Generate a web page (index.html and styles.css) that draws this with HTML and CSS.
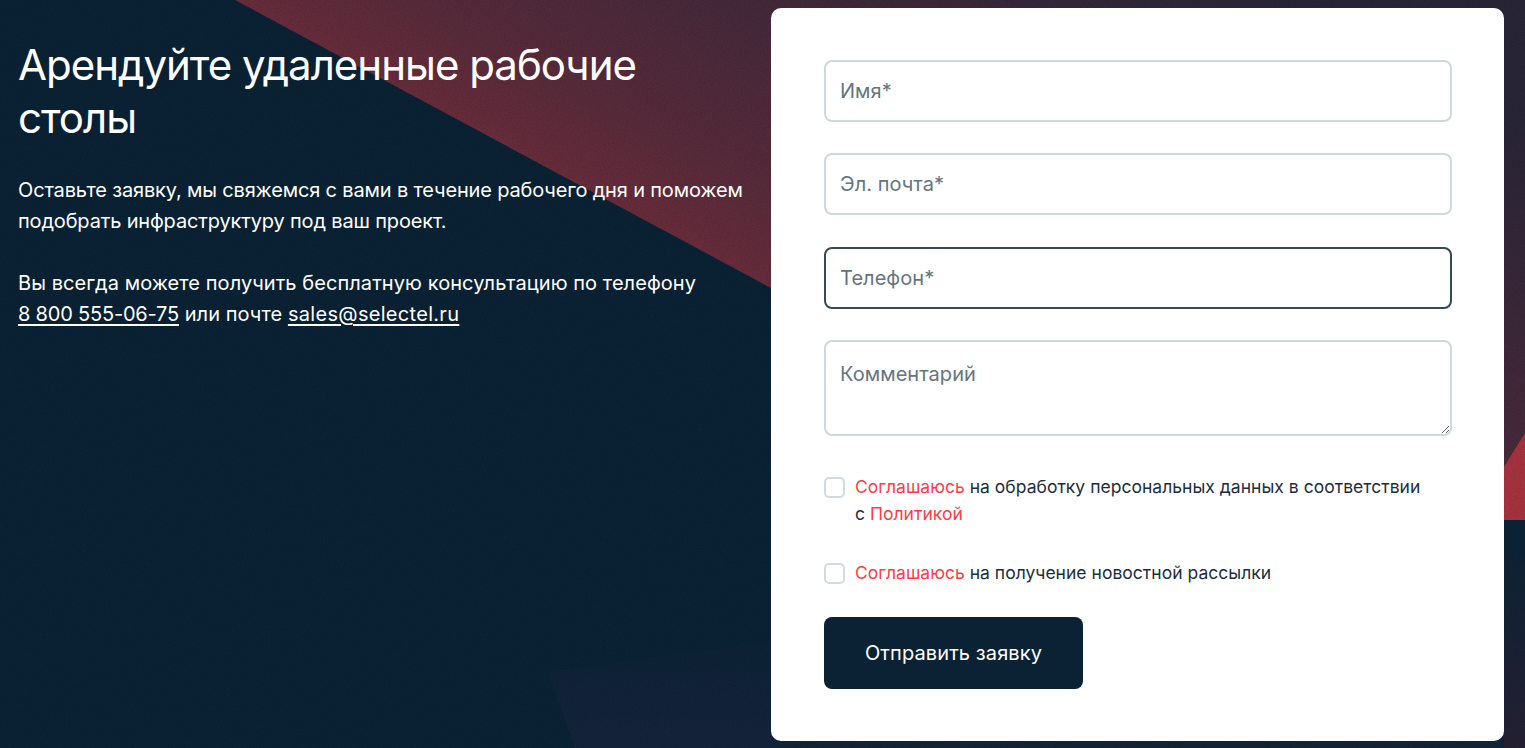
FILE: index.html
```html
<!DOCTYPE html>
<html lang="ru">
<head>
<meta charset="utf-8">
<title>Арендуйте удаленные рабочие столы</title>
<link rel="stylesheet" href="styles.css">
</head>
<body>
<svg class="bg" viewBox="0 0 1525 748" preserveAspectRatio="none" aria-hidden="true">
  <defs>
    <linearGradient id="wine" gradientUnits="userSpaceOnUse" x1="771" y1="288" x2="1006" y2="-152">
      <stop offset="0" stop-color="#672c3a"/>
      <stop offset="0.15" stop-color="#592b3a"/>
      <stop offset="0.45" stop-color="#45293a"/>
      <stop offset="1" stop-color="#282536"/>
    </linearGradient>
    <linearGradient id="dusk" gradientUnits="userSpaceOnUse" x1="0" y1="610" x2="0" y2="748">
      <stop offset="0" stop-color="#0a2234"/>
      <stop offset="1" stop-color="#15233a"/>
    </linearGradient>
    <linearGradient id="dusk2" gradientUnits="userSpaceOnUse" x1="0" y1="540" x2="0" y2="748">
      <stop offset="0" stop-color="#0c2335"/>
      <stop offset="1" stop-color="#252033"/>
    </linearGradient>
    <filter id="grain" x="0" y="0" width="100%" height="100%">
      <feTurbulence type="fractalNoise" baseFrequency="0.7" numOctaves="2" seed="4"/>
      <feColorMatrix type="matrix" values="0 0 0 0 0  0 0 0 0 0  0 0 0 0 0  0 0 0 1.4 -0.55"/>
    </filter>
  </defs>
  <rect width="1525" height="748" fill="#0a2234"/>
  <polygon points="235,0 1525,0 1525,520 1450,520 771,288" fill="url(#wine)"/>
  <polygon points="1504,467 1525,433 1525,520 1504,520" fill="#a5333f"/>
  <polygon points="548,672 1000,610 1504,610 1504,748 575,748" fill="url(#dusk)"/>
  <rect x="1504" y="520" width="21" height="228" fill="url(#dusk2)"/>
  <rect width="1525" height="748" filter="url(#grain)" opacity="0.16"/>
</svg>
<main class="page">
  <section class="intro">
    <h1 class="title">Арендуйте удаленные рабочие столы</h1>
    <p class="lead lead-tight">Оставьте заявку, мы свяжемся с вами в течение рабочего дня и поможем подобрать инфраструктуру под ваш проект.</p>
    <p class="lead">Вы всегда можете получить бесплатную консультацию по телефону<br><a class="plain-link phone-link" href="#">8 800 555-06-75</a> или почте <a class="plain-link mail-link" href="#">sales@selectel.ru</a></p>
  </section>
  <form class="card">
    <input class="field" type="text" placeholder="Имя*">
    <input class="field" type="email" placeholder="Эл. почта*">
    <input class="field field-active" type="tel" placeholder="Телефон*">
    <textarea class="field field-area" placeholder="Комментарий"></textarea>
    <label class="check check-first">
      <span class="box"></span>
      <span class="check-text"><a class="accent" href="#">Соглашаюсь</a> на обработку персональных данных в соответствии<br>с <a class="accent" href="#">Политикой</a></span>
    </label>
    <label class="check check-second">
      <span class="box"></span>
      <span class="check-text"><a class="accent" href="#">Соглашаюсь</a> на получение новостной рассылки</span>
    </label>
    <button class="submit" type="button">Отправить заявку</button>
  </form>
</main>
</body>
</html>
```
FILE: styles.css
```css
* { box-sizing: border-box; }
html, body { margin: 0; height: 100%; }
body {
  position: relative;
  width: 1525px;
  height: 748px;
  overflow: hidden;
  background: #0a2234;
  font-family: Inter, "Noto Sans", sans-serif;
}
.bg {
  position: absolute;
  inset: 0;
  width: 100%;
  height: 100%;
}
.page {
  position: relative;
  display: flex;
  height: 748px;
  padding: 8px 21px 7px 18px;
}
.intro {
  width: 753px;
  flex: none;
  padding-top: 30px;
  color: #fff;
}
.title {
  margin: 0 0 31px;
  width: 660px;
  font-size: 42px;
  line-height: 53px;
  font-weight: 400;
  letter-spacing: -1px;
}
.lead {
  margin: 0 0 31px;
  width: 740px;
  font-size: 20px;
  line-height: 31px;
  letter-spacing: 0.07px;
}
.lead-tight { letter-spacing: -0.16px; }
.plain-link { color: #fff; text-decoration: underline; text-underline-offset: 3px; }
.phone-link { letter-spacing: -0.2px; }
.mail-link { letter-spacing: 0.3px; }
.card {
  flex: 1;
  display: flex;
  flex-direction: column;
  align-items: flex-start;
  padding: 52px 52px 52px 53px;
  background: #fff;
  border-radius: 10px;
}
.field {
  display: block;
  width: 100%;
  height: 62px;
  flex: none;
  margin-bottom: 31.33px;
  padding: 0 14px;
  border: 2px solid #d0d8dc;
  border-radius: 8px;
  background: #fff;
  color: #0a2234;
  font: 400 20px/28px Inter, "Noto Sans", sans-serif;
  letter-spacing: 0.05px;
  outline: none;
}
.field::placeholder { color: #63757f; opacity: 1; }
.field-active { border-color: #34495a; }
.field-area {
  height: 96px;
  margin-bottom: 41px;
  padding: 18px 14px;
  resize: vertical;
}
.check {
  display: flex;
  align-items: flex-start;
  gap: 10px;
  width: 100%;
  flex: none;
  font-size: 17.5px;
  line-height: 27px;
  letter-spacing: 0.02px;
  color: #1b2e3e;
}
.check-first { height: 52px; margin-bottom: 34px; }
.check-second { height: 25px; margin-bottom: 29px; }
.box {
  flex: none;
  width: 21px;
  height: 21px;
  border: 2px solid #d3dade;
  border-radius: 5px;
  background: #fff;
}
.check-text { flex: 1; margin-top: -4px; }
.accent { color: #ff3b45; text-decoration: none; }
.submit {
  flex: none;
  width: 259px;
  height: 72px;
  border: 0;
  border-radius: 8px;
  background: #0a2234;
  color: #fff;
  font: 400 20px/28px Inter, "Noto Sans", sans-serif;
  letter-spacing: 0.1px;
}
```
